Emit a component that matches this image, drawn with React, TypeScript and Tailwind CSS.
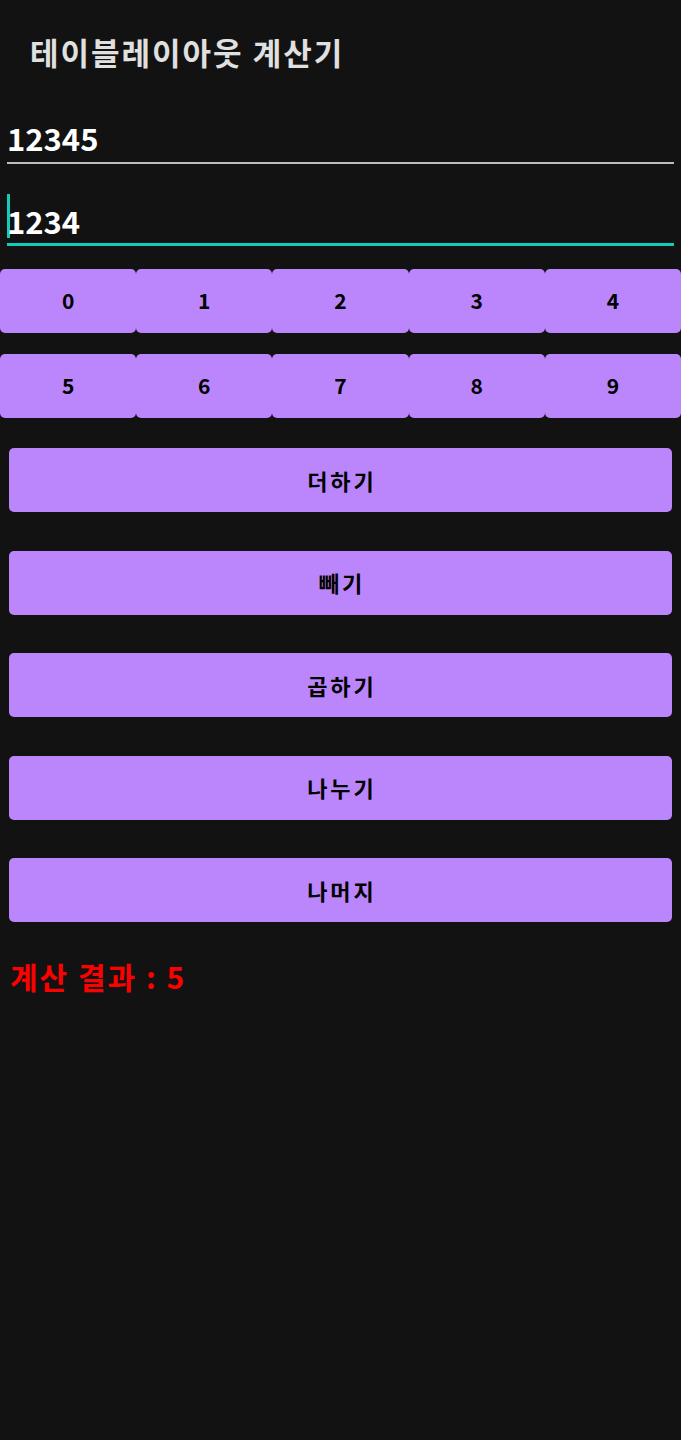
import React from "react";

const font = { fontFamily: '"Noto Sans CJK KR", "Noto Sans", sans-serif' };

export default function App() {
  const row1 = ["0", "1", "2", "3", "4"];
  const row2 = ["5", "6", "7", "8", "9"];
  const ops = ["더하기", "빼기", "곱하기", "나누기", "나머지"];
  return (
    <div className="min-h-[1440px] w-[681px] bg-[#121212]" style={font}>
      <div className="h-[104px] pl-[30px] pt-[28px]">
        <h1 className="text-[31px] font-bold leading-[48px] tracking-[2px] text-[#e0e0e0]">테이블레이아웃 계산기</h1>
      </div>
      <div className="px-[7px]">
        <div className="flex h-[60px] items-end border-b-2 border-[#bdbdbd] pb-[4px]">
          <span className="text-[31px] font-bold leading-[40px] text-white">12345</span>
        </div>
        <div className="mt-[18px] flex h-[64px] items-end border-b-[3px] border-[#14cbb7] pb-[2px]">
          <span className="mb-[3px] h-[44px] w-[3px] bg-[#14cbb7]" />
          <span className="-ml-[3px] text-[31px] font-bold leading-[40px] text-white">1234</span>
        </div>
      </div>
      <div className="mt-[23px] flex flex-col gap-[21px]">
        {[row1, row2].map((row, i) => (
          <div key={i} className="grid grid-cols-5">
            {row.map((d) => (
              <div key={d} className="flex h-[64px] items-center justify-center rounded-[5px] bg-[#bb86fc] text-[21px] font-bold text-black">
                {d}
              </div>
            ))}
          </div>
        ))}
      </div>
      <div className="mt-[30px] flex flex-col gap-[38.5px] px-[9px]">
        {ops.map((o) => (
          <div key={o} className="flex h-[64px] items-center justify-center rounded-[5px] bg-[#bb86fc] pl-[3px] text-[22px] font-bold tracking-[3px] text-black">
            {o}
          </div>
        ))}
      </div>
      <div className="mt-[34px] pl-[10px]">
        <span className="text-[30px] font-bold leading-[40px] tracking-[2px] text-[#ff0000]">계산 결과 : 5</span>
      </div>
    </div>
  );
}
